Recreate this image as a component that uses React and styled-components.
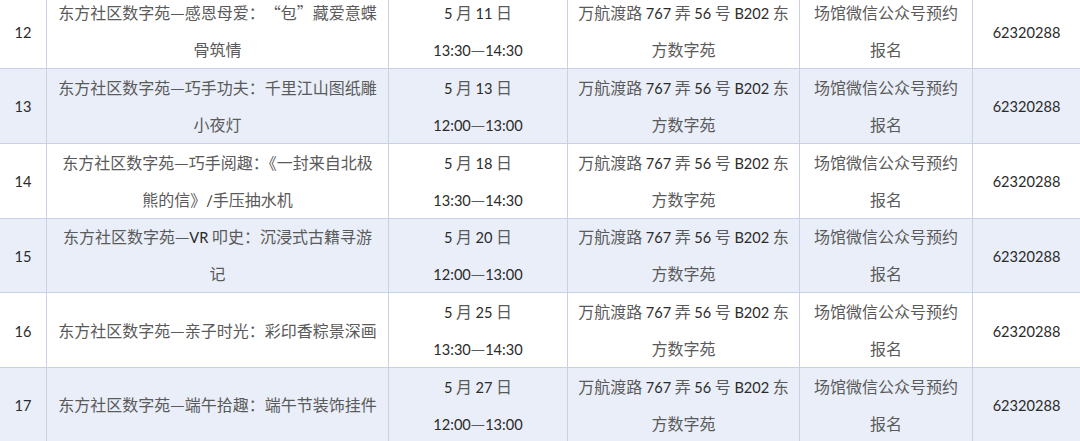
import React from "react";
import styled, { createGlobalStyle } from "styled-components";

const Global = createGlobalStyle`
  html, body { margin: 0; padding: 0; background: #ffffff; overflow: hidden; }
  body { font-family: "Noto Sans CJK SC", "Noto Sans", sans-serif; }
`;

const Table = styled.div`
  display: grid;
  grid-template-columns: 47px 342px 179px 232px 173px 108px;
  grid-auto-rows: 74.75px;
  width: 1081px;
  margin-top: -5.75px;
`;

const Cell = styled.div`
  box-sizing: border-box;
  display: flex;
  flex-direction: column;
  justify-content: center;
  align-items: center;
  text-align: center;
  border-right: 1px solid #c9d1e4;
  border-bottom: 1px solid #c9d1e4;
  background: ${(p) => (p.$shaded ? "#e9eef8" : "#ffffff")};
  font-family: "Noto Sans CJK SC", sans-serif;
  font-size: 16px;
  line-height: 37px;
  color: #5a5a5a;
  white-space: nowrap;
`;

const Line = styled.span`
  display: block;
  height: 37px;
`;

const Latin = styled.span`
  font-family: "Lato", "Liberation Sans", sans-serif;
  font-size: 14.6px;
  color: #2b2b2b;
`;

const Quote = styled.span`
  display: inline-block;
  width: 1em;
  text-align: ${(p) => (p.$open ? "right" : "left")};
`;

function Rich({ text }) {
  const parts = text.split(/([0-9A-Za-z:/]+|[“”])/);
  return parts.map((part, i) => {
    if (i % 2 === 0) return <React.Fragment key={i}>{part}</React.Fragment>;
    if (part === "“" || part === "”") {
      return (
        <Quote key={i} $open={part === "“"}>
          {part}
        </Quote>
      );
    }
    return <Latin key={i}>{part}</Latin>;
  });
}

function Lines({ lines }) {
  return lines.map((l, i) => (
    <Line key={i}>
      <Rich text={l} />
    </Line>
  ));
}

const ADDRESS = ["万航渡路 767 弄 56 号 B202 东", "方数字苑"];
const SIGNUP = ["场馆微信公众号预约", "报名"];
const PHONE = "62320288";

const rows = [
  { no: "12", title: ["东方社区数字苑—感恩母爱：“包”藏爱意蝶", "骨筑情"], time: ["5 月 11 日", "13:30—14:30"] },
  { no: "13", title: ["东方社区数字苑—巧手功夫：千里江山图纸雕", "小夜灯"], time: ["5 月 13 日", "12:00—13:00"] },
  { no: "14", title: ["东方社区数字苑—巧手阅趣：《一封来自北极", "熊的信》/手压抽水机"], time: ["5 月 18 日", "13:30—14:30"] },
  { no: "15", title: ["东方社区数字苑—VR 叩史：沉浸式古籍寻游", "记"], time: ["5 月 20 日", "12:00—13:00"] },
  { no: "16", title: ["东方社区数字苑—亲子时光：彩印香粽景深画"], time: ["5 月 25 日", "13:30—14:30"] },
  { no: "17", title: ["东方社区数字苑—端午拾趣：端午节装饰挂件"], time: ["5 月 27 日", "12:00—13:00"] },
];

export default function App() {
  return (
    <>
      <Global />
      <Table>
        {rows.map((r, idx) => {
          const shaded = idx % 2 === 1;
          return (
            <React.Fragment key={r.no}>
              <Cell $shaded={shaded}>
                <Lines lines={[r.no]} />
              </Cell>
              <Cell $shaded={shaded}>
                <Lines lines={r.title} />
              </Cell>
              <Cell $shaded={shaded}>
                <Lines lines={r.time} />
              </Cell>
              <Cell $shaded={shaded}>
                <Lines lines={ADDRESS} />
              </Cell>
              <Cell $shaded={shaded}>
                <Lines lines={SIGNUP} />
              </Cell>
              <Cell $shaded={shaded}>
                <Lines lines={[PHONE]} />
              </Cell>
            </React.Fragment>
          );
        })}
      </Table>
    </>
  );
}
